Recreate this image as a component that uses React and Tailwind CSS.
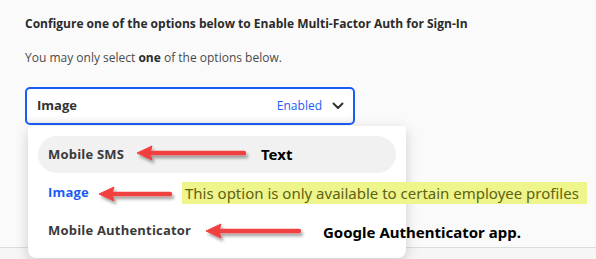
import React from "react";

function Arrow({ x1, x2, y }) {
  const len = x2 - x1;
  return (
    <svg
      className="absolute"
      style={{ left: x1 - 2, top: y - 10, width: len + 10, height: 24 }}
      viewBox={`0 0 ${len + 10} 24`}
    >
      <defs>
        <filter id={`sh${y}`} x="-10%" y="-50%" width="130%" height="200%">
          <feDropShadow dx="2" dy="3" stdDeviation="1.6" floodColor="#000" floodOpacity="0.35" />
        </filter>
      </defs>
      <g filter={`url(#sh${y})`}>
        <line x1={14} y1={10} x2={len - 1} y2={10} stroke="#f0403f" strokeWidth="4.5" strokeLinecap="round" />
        <path d={`M2 10 L17 3 L15 10 L17 17 Z`} fill="#f0403f" stroke="#f0403f" strokeWidth="1" strokeLinejoin="round" />
      </g>
    </svg>
  );
}

export default function App() {
  return (
    <div className="relative w-[596px] h-[259px] overflow-hidden bg-[#fafafa] font-['Open_Sans',sans-serif] flex flex-col">
      <div className="h-[247px] shrink-0 px-[25px] pt-[15px]">
        <h1 className="text-[12px] leading-[18px] font-bold text-[#2b2b2b]">
          Configure one of the options below to Enable Multi-Factor Auth for Sign-In
        </h1>
        <p className="mt-[16px] text-[12px] leading-[18px] text-[#4a4a4a]">
          You may only select <span className="font-bold text-[#2b2b2b]">one</span> of the options below.
        </p>
        <div className="mt-[20px] w-[330px] h-[38px] rounded-[5px] border-2 border-[#1a5cf5] bg-white flex items-center justify-between pl-[10px] pr-[9px] shadow-[inset_0_-6px_8px_-6px_rgba(0,0,0,0.12)]">
          <span className="text-[13px] font-bold text-[#333]">Image</span>
          <div className="flex items-center gap-[10px]">
            <span className="text-[12px] text-[#1a5cf5]">Enabled</span>
            <svg width="12" height="8" viewBox="0 0 12 8">
              <path d="M1.5 1.5 L6 6 L10.5 1.5" fill="none" stroke="#333" strokeWidth="2" strokeLinecap="round" strokeLinejoin="round" />
            </svg>
          </div>
        </div>
      </div>
      <div className="flex-1 border-t border-[#dcdcdc] bg-[#f6f6f6]" />

      <div className="absolute left-[28px] top-[126px] w-[378px] h-[132px] rounded-b-[8px] rounded-t-[3px] bg-white shadow-[0_4px_14px_rgba(0,0,0,0.18)] px-[10px] pt-[10px] flex flex-col">
        <div className="h-[37px] rounded-full bg-[#f1f1f1] flex items-center pl-[10px] text-[13px] font-bold text-[#3a3a3a] tracking-[0.2px]">
          Mobile SMS
        </div>
        <div className="h-[39px] flex items-center pl-[10px] text-[13px] font-bold text-[#1a5cf5] tracking-[0.2px]">
          Image
        </div>
        <div className="h-[38px] flex items-center pl-[10px] text-[13px] font-bold text-[#3a3a3a] tracking-[0.2px]">
          Mobile Authenticator
        </div>
      </div>

      <div className="absolute left-[182px] top-[182px] w-[405px] h-[22px] bg-[#eef58a] flex items-center pl-[3px] font-['Noto_Sans',sans-serif] text-[15px] text-[#5f6215] whitespace-nowrap">
        This option is only available to certain employee profiles
      </div>

      <Arrow x1={137} x2={247} y={153} />
      <Arrow x1={99} x2={173} y={194} />
      <Arrow x1={206} x2={302} y={231} />

      <div className="absolute left-[261px] top-[143px] font-['Noto_Sans',sans-serif] text-[15px] font-bold text-black leading-[22px]">
        Text
      </div>
      <div className="absolute left-[323px] top-[221px] font-['Noto_Sans',sans-serif] text-[15px] font-bold text-black leading-[22px] whitespace-nowrap">
        Google Authenticator app.
      </div>
    </div>
  );
}
